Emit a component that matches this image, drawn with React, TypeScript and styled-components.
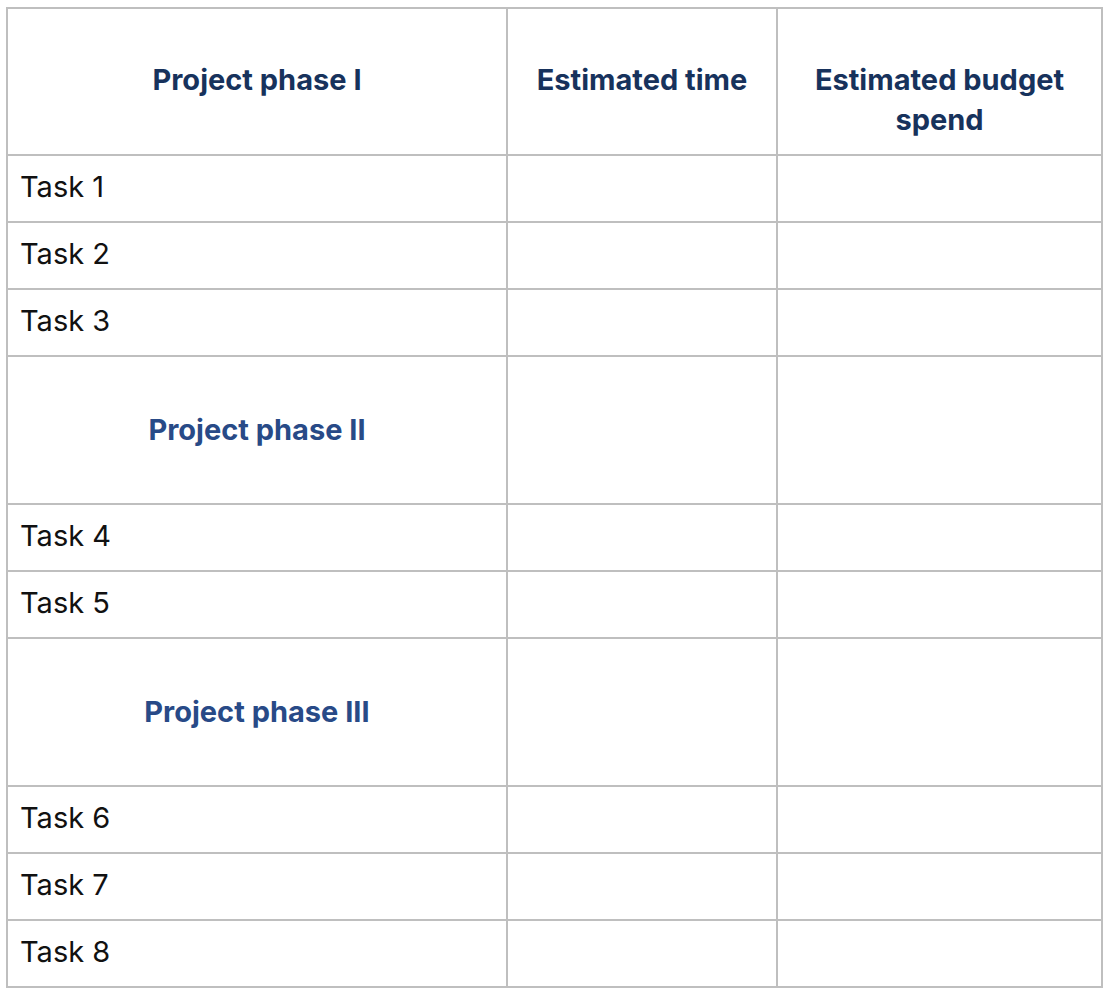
import React from "react";
import styled, { createGlobalStyle } from "styled-components";

const Global = createGlobalStyle`
  html, body { margin: 0; padding: 0; background: #ffffff; }
  body { padding: 7px 0 0 6px; font-family: Inter, "Noto Sans", sans-serif; }
`;

const Table = styled.table`
  border-collapse: collapse;
  table-layout: fixed;
  width: 1096px;
  font-family: Inter, "Noto Sans", sans-serif;
  font-size: 29px;
  line-height: 40px;
  color: #111111;
`;

const Col = styled.col<{ $w: number }>`
  width: ${(p) => p.$w}px;
`;

const HeadCell = styled.th`
  border: 2px solid #bfbfbf;
  height: 94px;
  padding: 51px 12px 0;
  vertical-align: top;
  text-align: center;
  font-weight: 700;
  color: #17325c;
`;

const Cell = styled.td`
  border: 2px solid #bfbfbf;
  height: 62px;
  padding: 0 12px 3px;
  vertical-align: middle;
  text-align: left;
`;

const PhaseCell = styled.td`
  border: 2px solid #bfbfbf;
  height: 144px;
  padding: 0 12px;
  vertical-align: middle;
  text-align: center;
  font-weight: 700;
  color: #284a87;
`;

const EmptyPhase = styled.td`
  border: 2px solid #bfbfbf;
  height: 144px;
`;

type Row = { kind: "task" | "phase"; label: string };

const rows: Row[] = [
  { kind: "task", label: "Task 1" },
  { kind: "task", label: "Task 2" },
  { kind: "task", label: "Task 3" },
  { kind: "phase", label: "Project phase II" },
  { kind: "task", label: "Task 4" },
  { kind: "task", label: "Task 5" },
  { kind: "phase", label: "Project phase III" },
  { kind: "task", label: "Task 6" },
  { kind: "task", label: "Task 7" },
  { kind: "task", label: "Task 8" },
];

export default function App() {
  return (
    <>
      <Global />
      <Table>
        <colgroup>
          <Col $w={500} />
          <Col $w={270} />
          <Col $w={325} />
        </colgroup>
        <thead>
          <tr>
            <HeadCell>Project phase I</HeadCell>
            <HeadCell>Estimated time</HeadCell>
            <HeadCell>Estimated budget spend</HeadCell>
          </tr>
        </thead>
        <tbody>
          {rows.map((r) =>
            r.kind === "task" ? (
              <tr key={r.label}>
                <Cell>{r.label}</Cell>
                <Cell />
                <Cell />
              </tr>
            ) : (
              <tr key={r.label}>
                <PhaseCell>{r.label}</PhaseCell>
                <EmptyPhase />
                <EmptyPhase />
              </tr>
            )
          )}
        </tbody>
      </Table>
    </>
  );
}
